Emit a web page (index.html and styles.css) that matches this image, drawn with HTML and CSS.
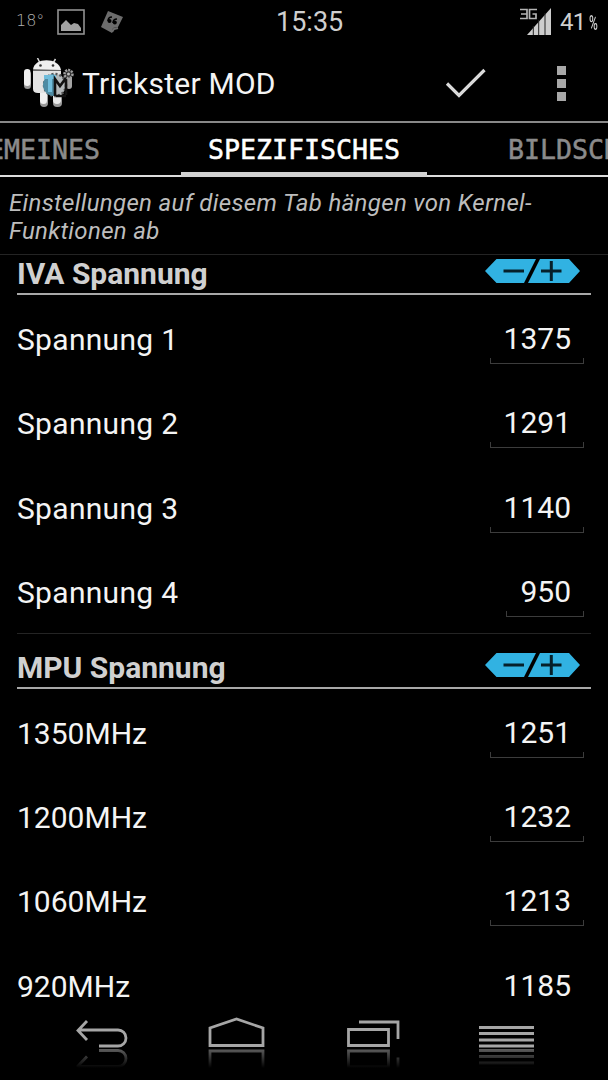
FILE: index.html
```
<!DOCTYPE html>
<html lang="de">
<head>
    <meta charset="UTF-8">
    <meta name="viewport" content="width=device-width, initial-scale=1.0">
    <title>Trickster MOD</title>
    <link rel="stylesheet" href="styles.css">
</head>
<body>
    <div class="screen">
        <div class="status-bar">
            <span class="temperature">18°</span>
            <svg class="picture-icon" width="28" height="26" viewBox="0 0 28 26">
                <rect x="1" y="1" width="26" height="24" fill="none" stroke="#929292" stroke-width="1.6"/>
                <path d="M4 22v-6l5-5 5 5 3-2 4 1 3 4v3z" fill="#a2a2a2"/>
            </svg>
            <svg class="note-icon" width="24" height="24" viewBox="0 0 24 24">
                <path d="M8 1l15 6-5 10-5 1-1 5L1 17z" fill="#6c6c6c"/>
                <path d="M12 22l2-3 4-1" fill="none" stroke="#6c6c6c" stroke-width="2"/>
                <path d="M12 7c-3 0-4 2-4 4m9-2c-3 0-4 2-4 4" fill="none" stroke="#000" stroke-width="1.5"/>
                <circle cx="9.5" cy="11" r="2" fill="#000"/>
                <circle cx="14.8" cy="12.5" r="2" fill="#000"/>
            </svg>
            <span class="clock">15:35</span>
            <svg class="signal-icon" width="32" height="27" viewBox="0 0 32 27">
                <path d="M0 1.5h7v9H0M1 6h6M17 1.5H9.5v9H16V6h-3.500" fill="none" stroke="#b4b4b4" stroke-width="1.7"/>
                <path d="M31 0v27H7z" fill="#cdcdcd"/>
                <path d="M13.300 18v9M18.700 12v15M25 5v22" stroke="#222" stroke-width="1"/>
            </svg>
            <span class="battery">41<small>%</small></span>
        </div>

        <div class="action-bar">
            <svg class="app-icon" width="52" height="50" viewBox="0 0 52 50">
                <path d="M14.500 0l3 6M32.500 1l-3 5" stroke="#d8d8d8" stroke-width="1.5"/>
                <rect x="1" y="13" width="7" height="18" rx="3.500" fill="#999"/>
                <rect x="1" y="11" width="6.500" height="17" rx="3.200" fill="#f0f0f0"/>
                <rect x="17" y="30" width="8" height="19" rx="4" fill="#999"/>
                <rect x="17" y="28" width="7" height="18" rx="3.500" fill="#f0f0f0"/>
                <rect x="30" y="30" width="9" height="19" rx="4" fill="#999"/>
                <rect x="30" y="28" width="8" height="18" rx="4" fill="#e8e8e8"/>
                <path d="M10 13h28v22H15q-5 0-5-4z" fill="#e4e4e4"/>
                <path d="M10 11.500C11 -1 36 -1 38 12z" fill="#efefef"/>
                <path d="M10 12.500h28" stroke="#666" stroke-width="1"/>
                <circle cx="17.500" cy="7.500" r="1.300" fill="#333"/>
                <circle cx="30" cy="7.500" r="1.300" fill="#333"/>
                <rect x="43" y="17" width="6" height="14" rx="3" fill="#a5a5a5"/>
                <circle cx="32" cy="27" r="11" fill="#b4b9bb" stroke="#555" stroke-width="2.500" stroke-dasharray="2 2"/>
                <path d="M31 16v22a11 11 0 0 1 0-22z" fill="#4e8ba3"/>
                <path d="M21 19h12M27 17v17" stroke="#71bddb" stroke-width="4"/>
                <path d="M32 38V21l5 7 6-8v17M33 38h10" fill="none" stroke="#121212" stroke-width="2.600"/>
                <circle cx="45.500" cy="16" r="4" fill="#333" stroke="#a0a0a0" stroke-width="2.500" stroke-dasharray="2 1"/>
                <circle cx="45.500" cy="16" r="1.500" fill="#bbb"/>
            </svg>
            <h1 class="app-title">Trickster MOD</h1>
            <svg class="check-icon" width="42" height="30" viewBox="0 0 42 30">
                <path d="M2 15.500l12 12L39.500 2" fill="none" stroke="#dadada" stroke-width="3.200"/>
            </svg>
            <svg class="overflow-icon" width="9" height="35" viewBox="0 0 9 35">
                <path d="M0 0h9v9H0zM0 13h9v9H0zM0 26h9v9H0z" fill="#a8a8a8"/>
            </svg>
        </div>

        <div class="tabs">
            <div class="tab tab-left"><span>ALLGEMEINES</span></div>
            <div class="tab active">SPEZIFISCHES</div>
            <div class="tab tab-right">BILDSCHIRM</div>
        </div>

        <p class="description">Einstellungen auf diesem Tab hängen von Kernel-<br>Funktionen ab</p>

        <div class="content">
            <section class="group">
                <div class="group-header first">
                    <h2>IVA Spannung</h2>
                    <svg class="adjust" width="95" height="24" viewBox="0 0 95 24">
                        <path d="M0 12L11.500 0H51L39 24H11.500zM55 0h29l11 12-11 12H43z" fill="#31b2e2"/>
                        <path d="M18.500 12h20.500M56 12h20.500M66.300 2v20" stroke="#06202a" stroke-width="3"/>
                    </svg>
                </div>
                <div class="row"><span class="label">Spannung 1</span><span class="value">1375</span></div>
                <div class="row"><span class="label">Spannung 2</span><span class="value">1291</span></div>
                <div class="row"><span class="label">Spannung 3</span><span class="value">1140</span></div>
                <div class="row"><span class="label">Spannung 4</span><span class="value">950</span></div>
            </section>
            <section class="group">
                <div class="group-header">
                    <h2>MPU Spannung</h2>
                    <svg class="adjust" width="95" height="24" viewBox="0 0 95 24">
                        <path d="M0 12L11.500 0H51L39 24H11.500zM55 0h29l11 12-11 12H43z" fill="#31b2e2"/>
                        <path d="M18.500 12h20.500M56 12h20.500M66.300 2v20" stroke="#06202a" stroke-width="3"/>
                    </svg>
                </div>
                <div class="row"><span>1350MHz</span><span class="value">1251</span></div>
                <div class="row"><span>1200MHz</span><span class="value">1232</span></div>
                <div class="row"><span>1060MHz</span><span class="value">1213</span></div>
                <div class="row"><span>920MHz</span><span class="value">1185</span></div>
            </section>
        </div>

        <!-- every icon is drawn once and mirrored under y=42 as a fading reflection -->
        <svg class="nav-bar" width="608" height="75" viewBox="0 0 608 75">
            <defs>
                <linearGradient id="fade" x1="0" y1="42.500" x2="0" y2="63" gradientUnits="userSpaceOnUse">
                    <stop offset="0" stop-color="#fff" stop-opacity="0.6"/>
                    <stop offset="1" stop-color="#fff" stop-opacity="0"/>
                </linearGradient>
                <mask id="reflection" maskUnits="userSpaceOnUse" x="0" y="42" width="608" height="33">
                    <rect x="0" y="42" width="608" height="33" fill="url(#fade)"/>
                </mask>
                <g id="icons" fill="none" stroke="#a6a6a6" stroke-width="2.800">
                    <path d="M99 41h19a8 8 0 0 0 0-16H78M87 16l-9 9.500 9 9.500"/>
                    <path d="M210 40.500V23l26.500-9L263 23v17.500z"/>
                    <path d="M348.500 24.500h40v16h-40zM359 17h39v17"/>
                    <path d="M479 22.500h55M479 28.500h55M479 35h55M479 41h55"/>
                </g>
            </defs>
            <use href="#icons"/>
            <g mask="url(#reflection)">
                <use href="#icons" transform="matrix(1 0 0 -1 0 86.500)"/>
            </g>
        </svg>
    </div>
</body>
</html>
```
FILE: styles.css
```
* {
    box-sizing: border-box;
}
body {
    margin: 0;
    background-color: #000;
    color: #f4f4f4;
    font-family: Roboto, sans-serif;
}
.screen {
    width: 608px;
    height: 1080px;
    display: flex;
    flex-direction: column;
    overflow: hidden;
}
.status-bar {
    height: 43px;
    flex: none;
    display: flex;
    align-items: center;
    padding: 0 9px 0 16px;
    color: #cfcfcf;
}
.temperature {
    width: 41px;
    margin-top: -2px;
    font-size: 16px;
    font-family: "DejaVu Sans", sans-serif;
    font-weight: 200;
    color: #b0b0b0;
}
.note-icon {
    margin-left: 15px;
}
.clock {
    width: 68px;
    margin-left: 152px;
    font-size: 27px;
}
.signal-icon {
    margin-left: auto;
}
.battery {
    width: 39px;
    margin-left: 8px;
    font-size: 24px;
    letter-spacing: -0.7px;
    white-space: nowrap;
}
.battery small {
    display: inline-block;
    margin-left: 3px;
    font-size: 20px;
    font-weight: 500;
    transform: scaleX(0.6);
    transform-origin: left;
}
.action-bar {
    height: 80px;
    flex: none;
    display: flex;
    align-items: center;
    padding: 0 42px 0 23px;
    border-bottom: 2px solid #888;
}
.app-icon {
    margin-top: 2px;
}
.app-title {
    margin: 3px 0 0 7px;
    font-size: 30px;
    font-weight: 400;
    letter-spacing: 0.25px;
}
.check-icon {
    margin-top: 2px;
    margin-left: auto;
}
.overflow-icon {
    margin-top: 2px;
    margin-left: 70px;
}
.tabs {
    height: 54px;
    flex: none;
    display: grid;
    grid-template-columns: 181px 246px 181px;
    border-bottom: 2px solid #dcdcdc;
    font-family: "DejaVu Sans Mono", monospace;
    font-size: 26.6px;
    line-height: 54px;
    color: #8b8b8b;
    -webkit-text-stroke: 0.5px currentColor;
}
.tab {
    height: 54px;
    overflow: hidden;
    white-space: nowrap;
}
.tab-left {
    display: flex;
    justify-content: flex-end;
    padding-right: 81px;
}
.tab-right {
    padding-left: 81px;
}
.tab.active {
    color: #fff;
    text-align: center;
    border-bottom: 5px solid #d2d2d2;
}
.description {
    height: 78px;
    flex: none;
    margin: 0;
    padding: 12px 9px 0;
    border-bottom: 1px solid #242424;
    font-size: 24px;
    font-style: italic;
    line-height: 28px;
    letter-spacing: 0.33px;
    color: #bdbdbd;
}
.content {
    height: 750px;
    flex: none;
    padding: 0 17px;
    overflow: hidden;
}
.group + .group {
    border-top: 1px solid #242424;
}
.group-header {
    height: 55px;
    display: flex;
    justify-content: space-between;
    align-items: flex-end;
    padding-right: 11px;
    border-bottom: 2px solid #a8a8a8;
}
.group-header.first {
    height: 40px;
}
.group-header h2 {
    margin: 0 0 2px;
    font-size: 30px;
    line-height: 34px;
    color: #d0d0d0;
}
.adjust {
    margin-bottom: 10px;
}
.row {
    height: 84.4px;
    display: flex;
    justify-content: space-between;
    align-items: flex-start;
    padding: 27px 7px 0 0;
    font-size: 30px;
    line-height: 36px;
}
.label {
    letter-spacing: 0.3px;
}
.value {
    height: 43px;
    margin-top: -1px;
    padding: 0 13px 0 14px;
    background:
        linear-gradient(#3c3c3c, #3c3c3c) left bottom / 1px 6px no-repeat,
        linear-gradient(#3c3c3c, #3c3c3c) right bottom / 1px 6px no-repeat,
        linear-gradient(#3c3c3c, #3c3c3c) left bottom / 100% 1px no-repeat;
}
.nav-bar {
    display: block;
    flex: none;
}
```
